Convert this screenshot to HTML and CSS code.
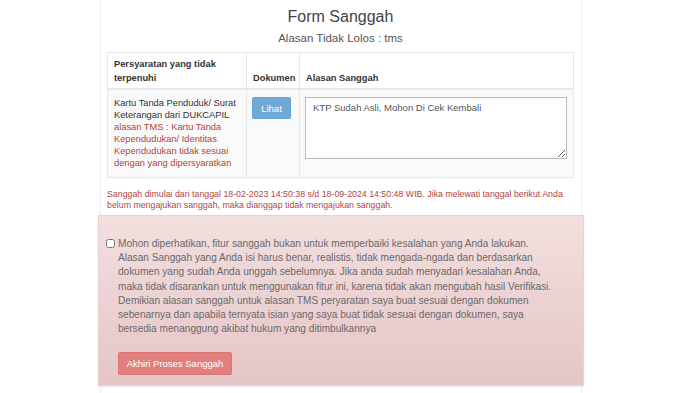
FILE: index.html
```html
<!DOCTYPE html>
<html lang="en">
<head>
    <meta charset="UTF-8">
    <meta name="viewport" content="width=device-width, initial-scale=1.0">
    <title>Form Sanggah</title>
    <link rel="stylesheet" href="styles.css">
</head>
<body>
    <div class="card">
        <h3 class="title">Form Sanggah</h3>
        <h4 class="subtitle">Alasan Tidak Lolos : tms</h4>

        <table class="sanggah-table">
            <thead>
                <tr>
                    <th class="col-syarat">Persyaratan yang tidak terpenuhi</th>
                    <th class="col-dok">Dokumen</th>
                    <th class="col-alasan">Alasan Sanggah</th>
                </tr>
            </thead>
            <tbody>
                <tr>
                    <td>
                        Kartu Tanda Penduduk/ Surat Keterangan dari DUKCAPIL
                        <span class="tms">alasan TMS : Kartu Tanda Kependudukan/ Identitas Kependudukan tidak sesuai dengan yang dipersyaratkan</span>
                    </td>
                    <td><button class="btn-lihat">Lihat</button></td>
                    <td><textarea class="alasan-input">KTP Sudah Asli, Mohon Di Cek Kembali</textarea></td>
                </tr>
            </tbody>
        </table>

        <p class="notice">Sanggah dimulai dari tanggal 18-02-2023 14:50:38 s/d 18-09-2024 14:50:48 WIB. Jika melewati tanggal berikut Anda belum mengajukan sanggah, maka dianggap tidak mengajukan sanggah.</p>

        <!-- Pernyataan -->
        <div class="alert-box">
            <label class="agree">
                <input type="checkbox">
                <span>Mohon diperhatikan, fitur sanggah bukan untuk memperbaiki kesalahan yang Anda lakukan. Alasan Sanggah yang Anda isi harus benar, realistis, tidak mengada-ngada dan berdasarkan dokumen yang sudah Anda unggah sebelumnya. Jika anda sudah menyadari kesalahan Anda, maka tidak disarankan untuk menggunakan fitur ini, karena tidak akan mengubah hasil Verifikasi. Demikian alasan sanggah untuk alasan TMS peryaratan saya buat sesuai dengan dokumen sebenarnya dan apabila ternyata isian yang saya buat tidak sesuai dengan dokumen, saya bersedia menanggung akibat hukum yang ditimbulkannya</span>
            </label>
            <button class="btn-akhiri">Akhiri Proses Sanggah</button>
        </div>
    </div>
</body>
</html>
```

FILE: styles.css
```css
body {
    font-family: "Liberation Sans", Arial, sans-serif;
    margin: 0;
    padding: 0;
    background-color: #fff;
    color: #333;
}

.card {
    width: 467px;
    margin-left: 100px;
    padding: 0 7px 20px 6px;
    border-left: 1px solid #eee;
    border-right: 1px solid #eee;
}

.title {
    margin: 0;
    padding-top: 7px;
    font-size: 16px;
    font-weight: normal;
    text-align: center;
    color: #444;
    line-height: 20px;
}

.subtitle {
    margin: 3px 0 0 0;
    font-size: 11.5px;
    font-weight: normal;
    text-align: center;
    color: #555;
    line-height: 16px;
}

.sanggah-table {
    width: 100%;
    margin-top: 6px;
    border-collapse: collapse;
    table-layout: fixed;
    border: 1px solid #e3e3e3;
    font-size: 9.3px;
}

.sanggah-table th,
.sanggah-table td {
    box-sizing: border-box;
    border: 1px solid #e8e8e8;
    text-align: left;
    padding: 4px 6px;
}

.sanggah-table th {
    vertical-align: bottom;
    font-weight: bold;
    line-height: 14px;
    color: #333;
    border-bottom-width: 2px;
    padding-bottom: 3px;
}

.col-syarat {
    width: 139px;
}

.col-dok {
    width: 53px;
}

.sanggah-table td {
    vertical-align: top;
    background-color: #f9f9f9;
    line-height: 12px;
    padding-top: 7px;
    padding-bottom: 8px;
    color: #333;
}

.tms {
    display: block;
    color: #b0463f;
}

.btn-lihat {
    display: block;
    width: 39px;
    height: 22px;
    margin-left: -1px;
    padding: 0;
    background-color: #6fa9d6;
    border: 1px solid #6aa3cf;
    border-radius: 2px;
    color: #fff;
    font-family: inherit;
    font-size: 9.5px;
}

.alasan-input {
    display: block;
    width: 262px;
    height: 62px;
    box-sizing: border-box;
    margin-left: -1px;
    padding: 4px 7px;
    border: 1px solid #bbb;
    background-color: #fff;
    font-family: inherit;
    font-size: 9.5px;
    color: #555;
    resize: vertical;
}

.notice {
    margin: 11px 0 0 0;
    font-size: 8.8px;
    line-height: 11px;
    color: #b0463f;
}

.alert-box {
    margin: 4px -10px 0 -9px;
    padding: 21px 31px 10px 7px;
    background: linear-gradient(to bottom, #f3dfdf 0%, #e5c5c6 100%);
    border: 1px solid #ead0d0;
    box-shadow: 0 1px 2px rgba(0, 0, 0, 0.08);
}

.agree {
    display: flex;
    align-items: flex-start;
    font-size: 10.1px;
    line-height: 14.2px;
    color: #6a6a6a;
}

.agree input {
    margin: 2px 3px 0 0;
    width: 9px;
    height: 9px;
    flex-shrink: 0;
}

.btn-akhiri {
    display: block;
    margin: 16px 0 0 12px;
    width: 114px;
    height: 23px;
    padding: 0;
    background-color: #e27f7d;
    border: 1px solid #dd7674;
    border-radius: 2px;
    color: #fff;
    font-family: inherit;
    font-size: 9.5px;
}
```
